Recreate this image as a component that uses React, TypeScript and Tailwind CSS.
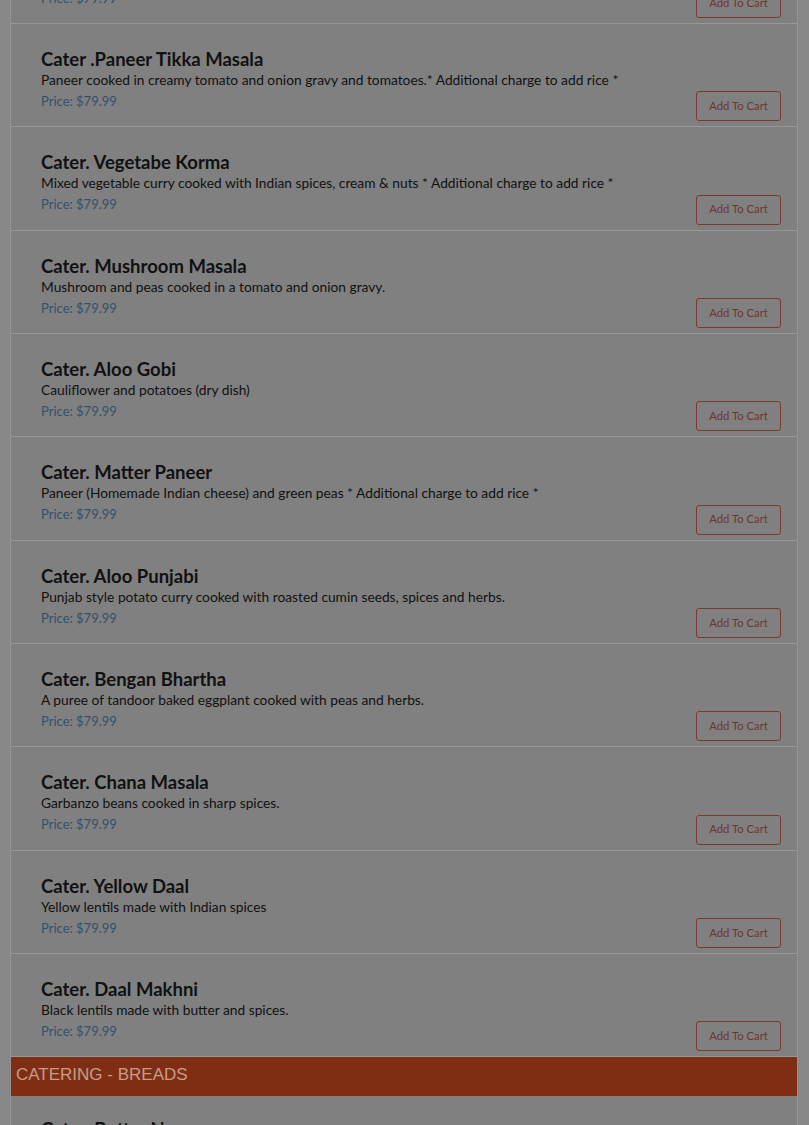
const items = [
  { name: "Cater. Dal Tadka", desc: "Yellow lentils tempered with cumin and garlic." },
  { name: "Cater .Paneer Tikka Masala", desc: "Paneer cooked in creamy tomato and onion gravy and tomatoes.* Additional charge to add rice *" },
  { name: "Cater. Vegetabe Korma", desc: "Mixed vegetable curry cooked with Indian spices, cream & nuts * Additional charge to add rice *" },
  { name: "Cater. Mushroom Masala", desc: "Mushroom and peas cooked in a tomato and onion gravy." },
  { name: "Cater. Aloo Gobi", desc: "Cauliflower and potatoes (dry dish)" },
  { name: "Cater. Matter Paneer", desc: "Paneer (Homemade Indian cheese) and green peas * Additional charge to add rice *" },
  { name: "Cater. Aloo Punjabi", desc: "Punjab style potato curry cooked with roasted cumin seeds, spices and herbs." },
  { name: "Cater. Bengan Bhartha", desc: "A puree of tandoor baked eggplant cooked with peas and herbs." },
  { name: "Cater. Chana Masala", desc: "Garbanzo beans cooked in sharp spices." },
  { name: "Cater. Yellow Daal", desc: "Yellow lentils made with Indian spices" },
  { name: "Cater. Daal Makhni", desc: "Black lentils made with butter and spices." },
];

function MenuRow({ name, desc }: { name: string; desc: string }) {
  return (
    <div className="flex h-[103.35px] items-end justify-between border-b border-[#989898] pl-[30px] pr-[16px]">
      <div className="self-start pt-[24px]">
        <h3 className="text-[18.5px] font-bold leading-[22px] text-[#111]">{name}</h3>
        <p className="text-[13.75px] leading-[20px] text-[#111]">{desc}</p>
        <p className="text-[13px] leading-[22px] text-[#34506c]">Price: $79.99</p>
      </div>
      <button className="mb-[5px] h-[30px] w-[85px] rounded-[3px] border border-[#7a3a30] text-[11.3px] text-[#6e3630]">
        Add To Cart
      </button>
    </div>
  );
}

export default function App() {
  return (
    <div className="h-[1125px] overflow-hidden bg-[#878787]" style={{ fontFamily: "Lato, 'Open Sans', sans-serif" }}>
      <div className="ml-[10px] mt-[-79.35px] w-[788px] border-x border-[#959595] bg-[#808080]">
        {items.map((it) => (
          <MenuRow key={it.name} name={it.name} desc={it.desc} />
        ))}
        {/* Breads section */}
        <div className="flex h-[39px] items-center bg-[#7e2f13] pb-[4px] pl-[5px]">
          <h2 className="text-[17px] text-[#c89c88]" style={{ fontFamily: "'Liberation Sans', Arial, sans-serif" }}>
            CATERING - BREADS
          </h2>
        </div>
        <div className="pl-[30px] pt-[22px]">
          <h3 className="text-[18.5px] font-bold leading-[22px] text-[#111]">Cater. Butter Naan</h3>
        </div>
      </div>
    </div>
  );
}
